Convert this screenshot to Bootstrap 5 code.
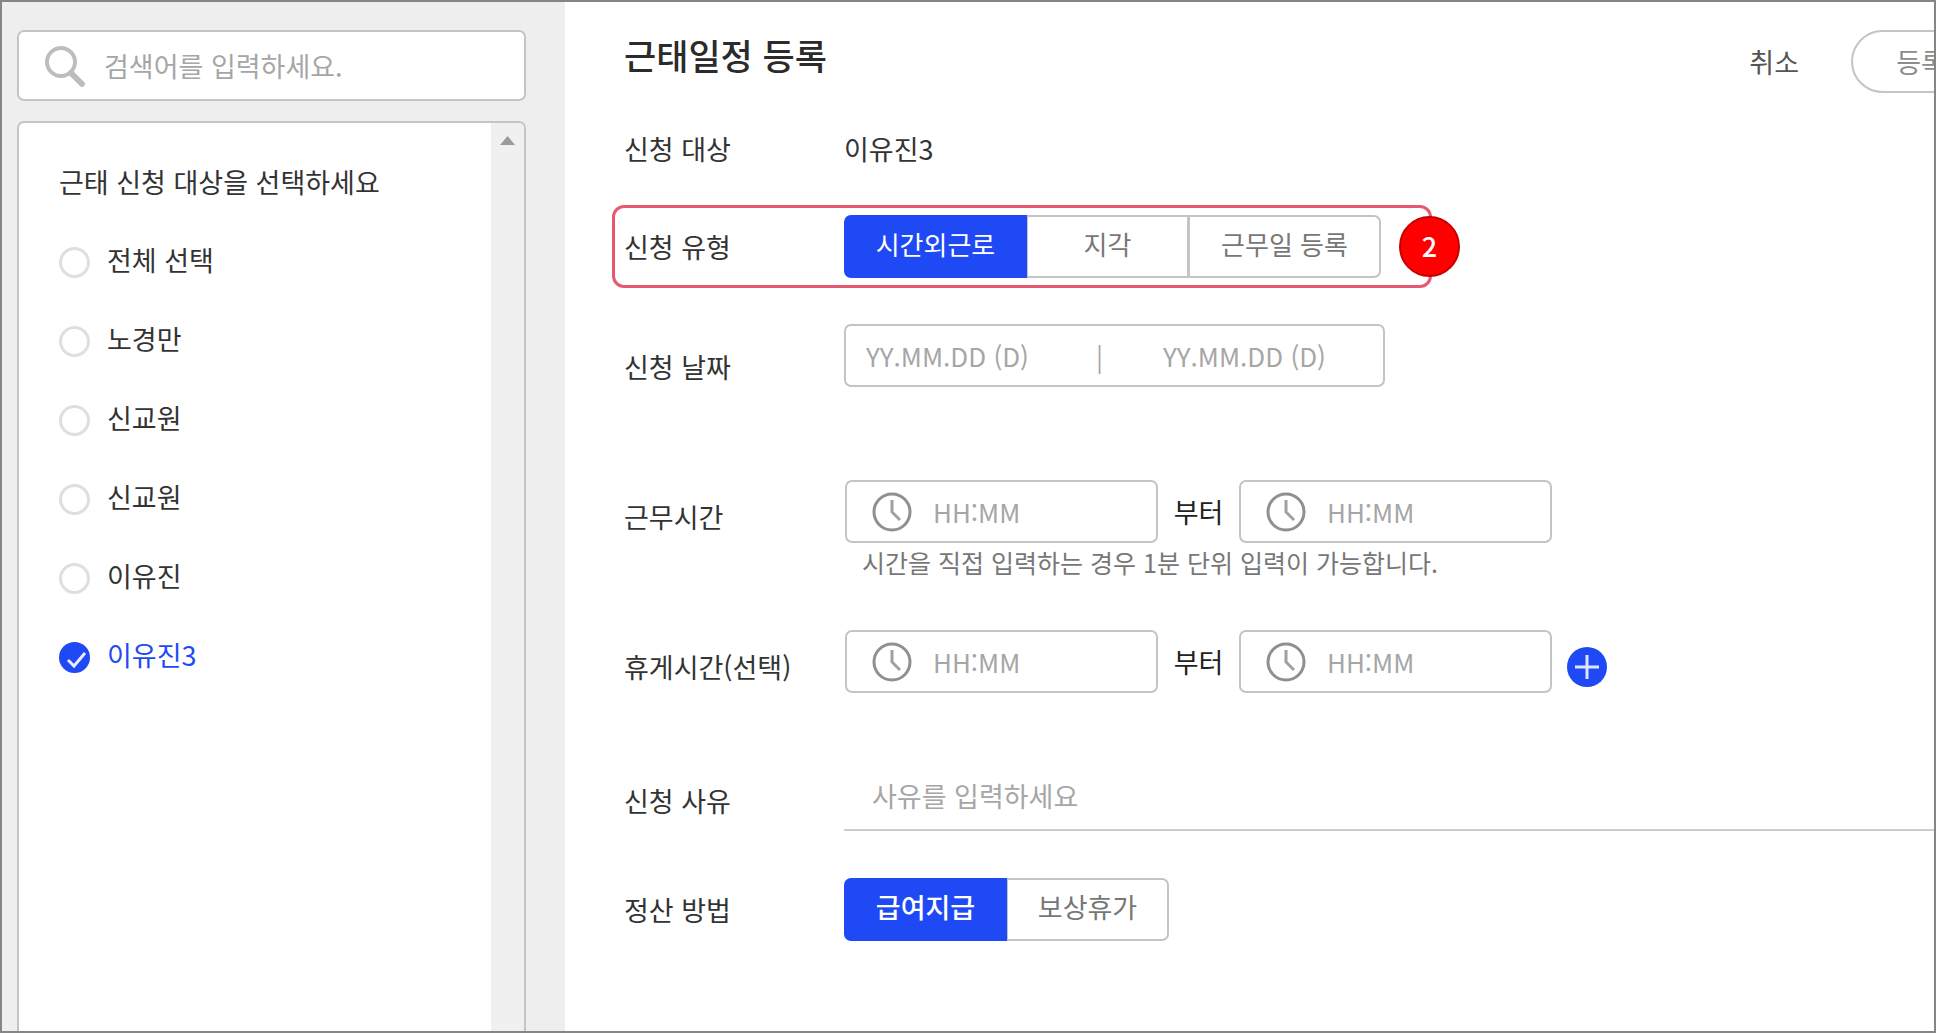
<!DOCTYPE html>
<html lang="ko">
<head>
<meta charset="utf-8">
<meta name="viewport" content="width=device-width, initial-scale=1">
<title>근태일정 등록</title>
<link href="https://cdn.jsdelivr.net/npm/bootstrap@5.3.0/dist/css/bootstrap.min.css" rel="stylesheet">
<style>
  :root { --line: #c4c4c4; --brand: #1f49f5; --ink: #333; --soft: #a6a6a6; }
  body { font-family: "Noto Sans CJK KR", sans-serif; font-size: 27px; line-height: 38px; color: var(--ink); background: #fff; }
  .frame { min-height: 100vh; border: 2px solid #858585; overflow: hidden; }
  .side { width: 563px; background: #eee; padding: 28px 39px 0 15px; }
  .searchbox { height: 71px; border: 2px solid var(--line); border-radius: 7px; background: #fff; padding: 0 25px; gap: 18px; }
  .plain { border: 0; outline: 0; background: transparent; min-width: 0; padding: 0; color: var(--ink); }
  .plain::placeholder { color: var(--soft); opacity: 1; }
  .people { margin-top: 20px; border: 2px solid var(--line); border-bottom: 0; border-radius: 7px 7px 0 0; background: #fff; overflow: hidden; }
  .people-list { padding: 40px 0 0 40px; }
  .people-title { font-size: 27px; line-height: 38px; margin: 0 0 22px; font-weight: 400; }
  .person { height: 79px; gap: 17px; cursor: pointer; }
  .person input { appearance: none; width: 31px; height: 31px; border: 3px solid #dfdfdf; border-radius: 50%; margin: 0; background: #fff; }
  .person input:checked { border: 0; background: var(--brand) url("data:image/svg+xml,%3Csvg xmlns='http://www.w3.org/2000/svg' viewBox='0 0 31 31'%3E%3Cpath d='M9 18l6 6 11-13' fill='none' stroke='%23e8ecff' stroke-width='3'/%3E%3C/svg%3E"); }
  .person input:checked + span { color: var(--brand); }
  .person span { padding-bottom: 6px; }
  .scroller { width: 33px; background: #f0f0f0; padding-top: 13px; }
  .main { padding: 28px 0 40px 59px; }
  .head { gap: 52px; margin: 0 -57px 37px 0; }
  .head h1 { font-size: 35px; line-height: 50px; font-weight: 500; margin: 0; color: #2b2b2b; }
  .cancel { color: #555; }
  .pill { width: 140px; height: 63px; border: 2px solid var(--line); border-radius: 32px; background: #fff; color: #8c8c8c; padding: 0; }
  .rowlabel { width: 220px; flex: none; }
  .drop { padding-top: 10px; }
  .ctl { height: 63px; }
  .box { border: 2px solid var(--line); border-radius: 7px; background: #fff; }
  .line-type { position: relative; width: fit-content; margin: 37px 0 36px -12px; border: 3px solid #e55a70; border-radius: 12px; padding: 7px 48px 7px 9px; }
  .marker { position: absolute; right: -31px; top: 8px; width: 61px; height: 61px; border-radius: 50%; background: #f00; border: 2px solid #c80000; color: #fff; font-weight: 500; line-height: 55px; text-align: center; }
  .seg .btn { --bs-btn-font-size: 26px; --bs-btn-line-height: 38px; --bs-btn-color: #777; --bs-btn-border-color: var(--line); --bs-btn-border-width: 2px; --bs-btn-border-radius: 7px;
    --bs-btn-active-bg: var(--brand); --bs-btn-active-color: #fff; --bs-btn-active-border-color: var(--brand); padding: 0 0 6px; height: 63px; }
  .seg > .btn:not(:first-child) { margin-left: -2px; }
  .seg .w-a { width: 183px; } .seg .w-b { width: 163px; } .seg .w-c { width: 193px; }
  .pay .btn { --bs-btn-font-size: 27px; width: 163px; }
  .pay .btn.active { font-weight: 500; }
  .dates, .time { font-size: 26px; }
  .dates { width: 541px; padding: 0 20px; }
  .dates .plain { width: 200px; }
  .dates .bar { width: 97px; padding-left: 30px; color: var(--soft); }
  .line-work { margin: 93px 0 49px; }
  .line-reason { margin: 71px 0 47px; }
  .time { width: 313px; padding: 0 25px; gap: 21px; }
  .times { padding-left: 1px; }
  .from { width: 81px; text-align: center; color: #222; }
  .hint { font-size: 25px; color: #777; padding-left: 17px; }
  .add { width: 40px; height: 40px; margin: 10px 0 0 15px; }
  .reason { height: 67px; border-bottom: 2px solid #ccc; padding: 0 0 3px 28px; }
</style>
<script src="https://cdn.jsdelivr.net/npm/bootstrap@5.3.0/dist/js/bootstrap.bundle.min.js"></script>
</head>
<body>
<svg class="d-none" aria-hidden="true">
  <symbol id="clock" viewBox="0 0 40 40"><circle cx="20" cy="20" r="18" fill="none" stroke="#909090" stroke-width="3"/><path d="M20 8v12l8 8" fill="none" stroke="#a0a0a0" stroke-width="3"/></symbol>
</svg>
<div class="frame d-flex">
  <aside class="side d-flex flex-column flex-shrink-0">
    <div class="searchbox d-flex align-items-center">
      <svg width="42" height="42" viewBox="0 0 42 42" aria-hidden="true"><circle cx="17" cy="17" r="14" fill="none" stroke="#bdbdbd" stroke-width="4"/><path d="M27 28l11 11" stroke="#bdbdbd" stroke-width="6" stroke-linecap="round"/></svg>
      <input class="plain flex-grow-1" type="search" placeholder="검색어를 입력하세요." aria-label="검색어">
    </div>
    <div class="people d-flex flex-grow-1">
      <div class="people-list flex-grow-1">
        <h2 class="people-title">근태 신청 대상을 선택하세요</h2>
        <label class="person d-flex align-items-center"><input type="checkbox"><span>전체 선택</span></label>
        <label class="person d-flex align-items-center"><input type="checkbox"><span>노경만</span></label>
        <label class="person d-flex align-items-center"><input type="checkbox"><span>신교원</span></label>
        <label class="person d-flex align-items-center"><input type="checkbox"><span>신교원</span></label>
        <label class="person d-flex align-items-center"><input type="checkbox"><span>이유진</span></label>
        <label class="person d-flex align-items-center"><input type="checkbox" checked><span>이유진3</span></label>
      </div>
      <div class="scroller d-flex justify-content-center align-items-start"><svg width="15" height="9" viewBox="0 0 15 9" aria-hidden="true"><path d="M0 9L7.500 0 15 9z" fill="#9a9a9a"/></svg></div>
    </div>
  </aside>
  <main class="main flex-grow-1">
    <header class="head d-flex align-items-center">
      <h1 class="me-auto align-self-start">근태일정 등록</h1>
      <button type="button" class="plain cancel">취소</button>
      <button type="button" class="pill">등록</button>
    </header>

    <div class="d-flex"><div class="rowlabel">신청 대상</div><div>이유진3</div></div>

    <div class="line-type d-flex align-items-center">
      <div class="rowlabel" id="l-type">신청 유형</div>
      <div class="btn-group seg" role="group" aria-labelledby="l-type">
        <button type="button" class="btn w-a active" aria-pressed="true">시간외근로</button>
        <button type="button" class="btn w-b">지각</button>
        <button type="button" class="btn w-c">근무일 등록</button>
      </div>
      <span class="marker">2</span>
    </div>

    <div class="d-flex">
      <label class="rowlabel pt-4" for="d1">신청 날짜</label>
      <div class="dates box ctl d-flex align-items-center">
        <input class="plain" id="d1" placeholder="YY.MM.DD (D)">
        <span class="bar">|</span>
        <input class="plain" placeholder="YY.MM.DD (D)" aria-label="종료 날짜">
      </div>
    </div>

    <div class="line-work d-flex">
      <label class="rowlabel ctl drop d-flex align-items-center" for="w1">근무시간</label>
      <div class="times">
        <div class="d-flex align-items-center">
          <div class="time box ctl d-flex align-items-center"><svg width="40" height="40" class="flex-shrink-0" aria-hidden="true"><use href="#clock"/></svg><input class="plain flex-grow-1" id="w1" placeholder="HH:MM"></div>
          <span class="from">부터</span>
          <div class="time box ctl d-flex align-items-center"><svg width="40" height="40" class="flex-shrink-0" aria-hidden="true"><use href="#clock"/></svg><input class="plain flex-grow-1" placeholder="HH:MM" aria-label="근무 종료 시간"></div>
        </div>
        <div class="hint">시간을 직접 입력하는 경우 1분 단위 입력이 가능합니다.</div>
      </div>
    </div>

    <div class="d-flex">
      <label class="rowlabel ctl drop d-flex align-items-center" for="b1">휴게시간(선택)</label>
      <div class="times d-flex align-items-center">
        <div class="time box ctl d-flex align-items-center"><svg width="40" height="40" class="flex-shrink-0" aria-hidden="true"><use href="#clock"/></svg><input class="plain flex-grow-1" id="b1" placeholder="HH:MM"></div>
        <span class="from">부터</span>
        <div class="time box ctl d-flex align-items-center"><svg width="40" height="40" class="flex-shrink-0" aria-hidden="true"><use href="#clock"/></svg><input class="plain flex-grow-1" placeholder="HH:MM" aria-label="휴게 종료 시간"></div>
        <button type="button" class="plain add d-flex" aria-label="휴게시간 추가"><svg width="40" height="40" viewBox="0 0 40 40"><circle cx="20" cy="20" r="20" fill="#1f49f5"/><path d="M20 8v24M8 20h24" stroke="#dfe5ff" stroke-width="3"/></svg></button>
      </div>
    </div>

    <div class="line-reason d-flex">
      <label class="rowlabel ctl drop d-flex align-items-center" for="r1">신청 사유</label>
      <input class="plain reason flex-grow-1 rounded-0" id="r1" placeholder="사유를 입력하세요">
    </div>

    <div class="d-flex align-items-center">
      <div class="rowlabel" id="l-pay">정산 방법</div>
      <div class="btn-group seg pay" role="group" aria-labelledby="l-pay">
        <button type="button" class="btn active" aria-pressed="true">급여지급</button>
        <button type="button" class="btn">보상휴가</button>
      </div>
    </div>
  </main>
</div>
</body>
</html>
